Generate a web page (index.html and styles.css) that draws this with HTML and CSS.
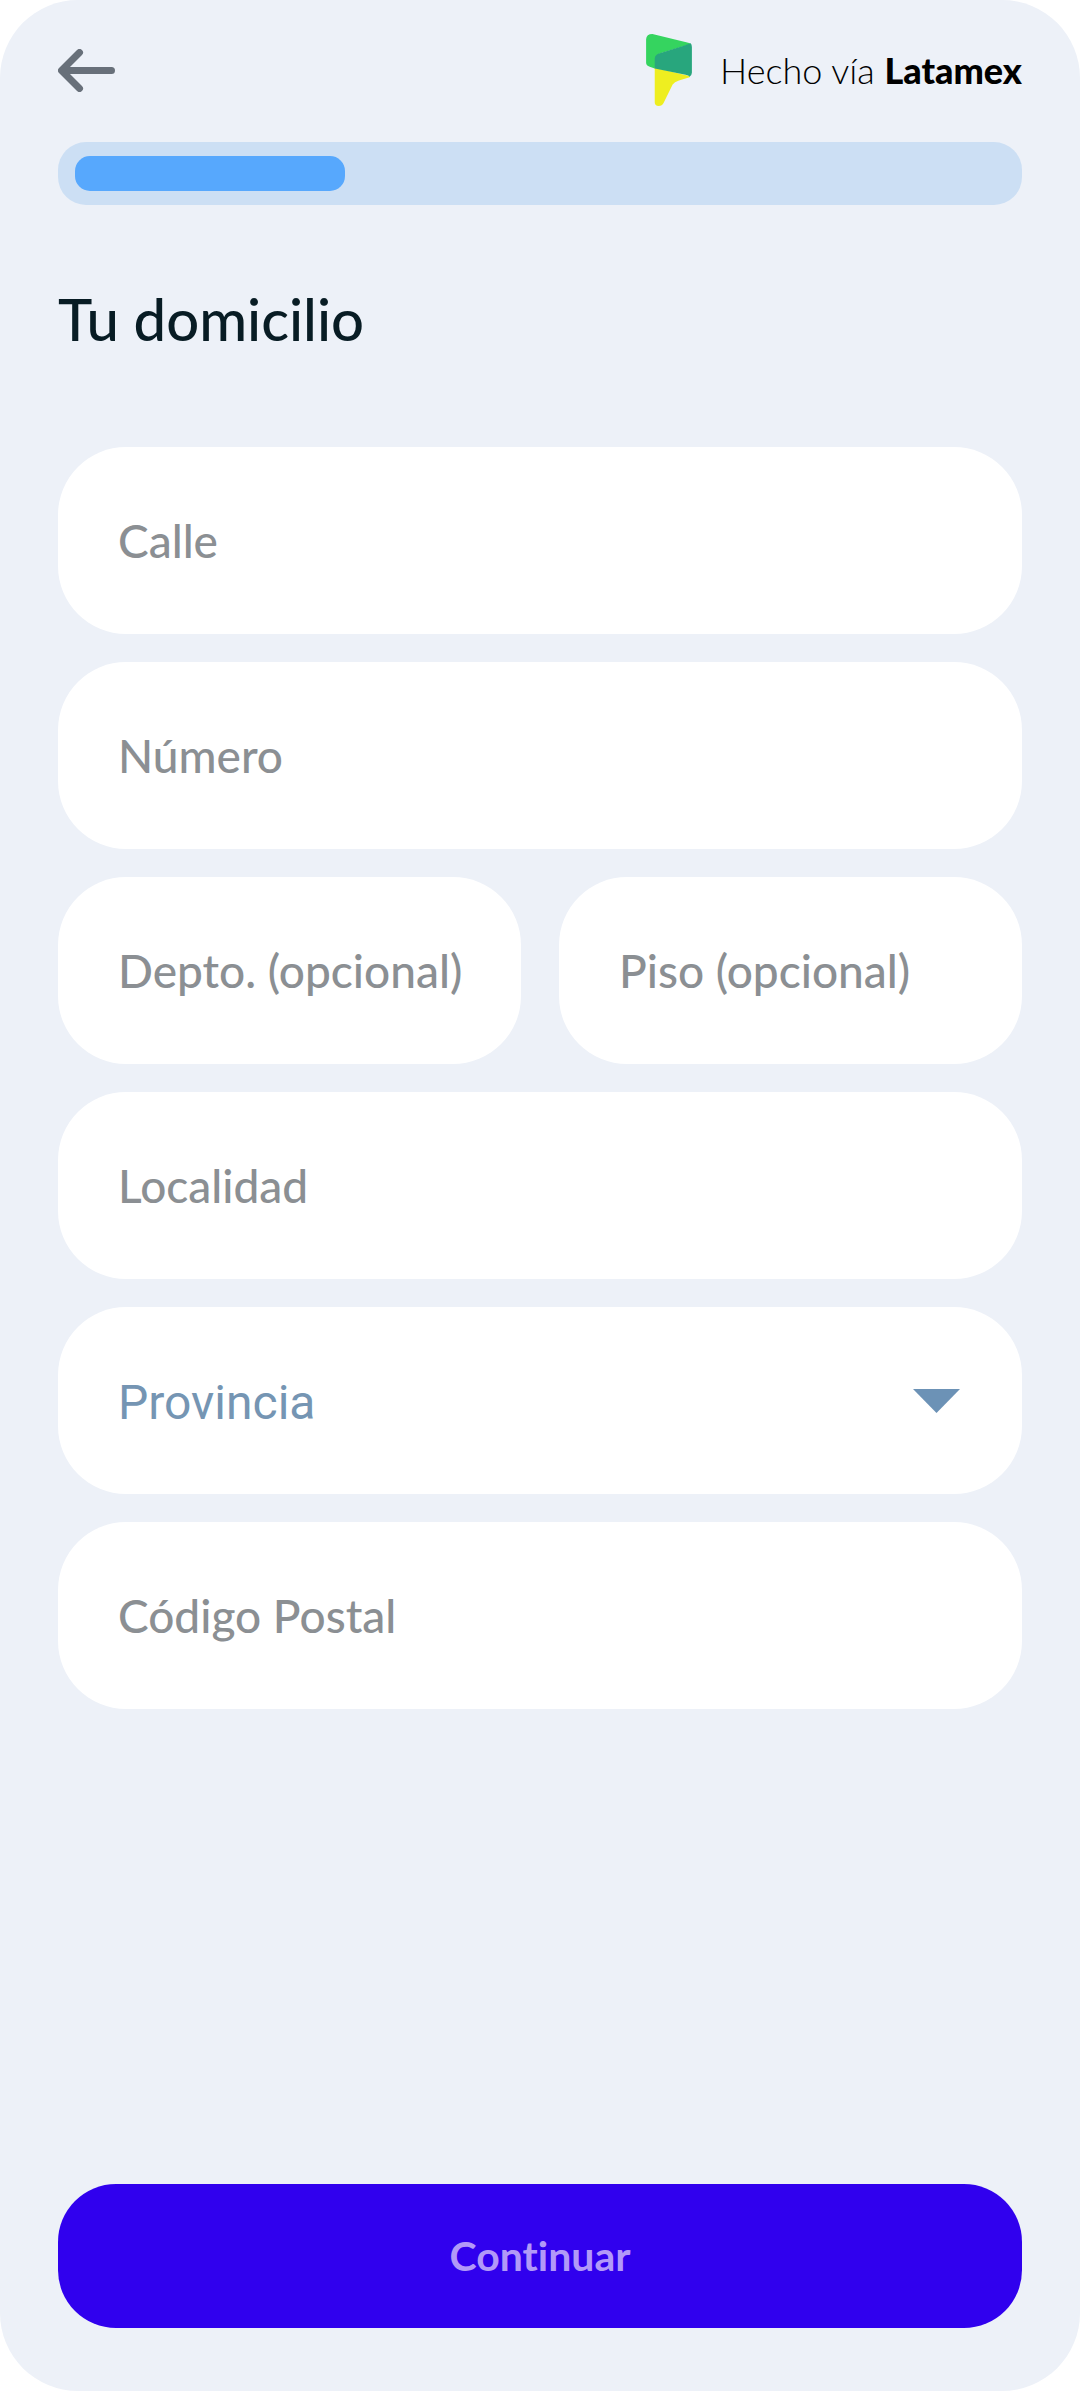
FILE: index.html
```html
<!DOCTYPE html>
<html lang="es">
<head>
  <meta charset="UTF-8">
  <meta name="viewport" content="width=device-width, initial-scale=1.0">
  <title>Tu domicilio</title>
  <link rel="stylesheet" href="styles.css">
</head>
<body>
  <main class="screen">
    <header class="topbar">
      <button class="back" type="button" aria-label="Volver">
        <svg width="57" height="43" viewBox="0 0 57 43" fill="none" stroke="#68707a" stroke-width="7" stroke-linecap="round" stroke-linejoin="round">
          <path d="M53.5 21.5H5M21.5 3.5L3.5 21.5L21.5 39.5"/>
        </svg>
      </button>
      <div class="brand">
        <svg class="brand-logo" width="46" height="72" viewBox="69 101 138 217">
          <path fill="#35d45f" d="M69 117Q70 101 88 101L190 126Q200 128 204 131L110 160L97 206L80 200Q69 197 69 188Z"/>
          <path fill="#eeee20" d="M95 203L190 225Q205 228 200 231L168 241Q154 245 149 253L122 308Q117 318 107 318Q95 318 95 307Z"/>
          <path fill="#28a67d" d="M95 174Q96 163 110 159L180 137Q194 133 203 129Q207 132 207 140V218Q206 228 200 230Q198 226 188 224L95 205Z"/>
        </svg>
        <span class="brand-text">Hecho vía <strong>Latamex</strong></span>
      </div>
    </header>

    <div class="progress" role="progressbar" aria-label="Progreso" aria-valuemin="0" aria-valuemax="100" aria-valuenow="29">
      <div class="progress-bar" style="width: 29%"></div>
    </div>

    <h1 class="title">Tu domicilio</h1>

    <form class="form" id="address">
      <input class="field" type="text" name="calle" placeholder="Calle" aria-label="Calle">
      <input class="field" type="text" name="numero" placeholder="Número" aria-label="Número">
      <div class="row">
        <input class="field" type="text" name="depto" placeholder="Depto. (opcional)" aria-label="Depto. (opcional)">
        <input class="field" type="text" name="piso" placeholder="Piso (opcional)" aria-label="Piso (opcional)">
      </div>
      <input class="field" type="text" name="localidad" placeholder="Localidad" aria-label="Localidad">
      <div class="select">
        <select class="field" name="provincia" aria-label="Provincia">
          <option>Provincia</option>
        </select>
        <svg class="select-arrow" width="47" height="24" viewBox="0 0 47 24">
          <path fill="#6c92b6" d="M0 0H47L23.5 24Z"/>
        </svg>
      </div>
      <input class="field" type="text" name="cp" placeholder="Código Postal" aria-label="Código Postal">
    </form>

    <button class="submit" type="submit" form="address">Continuar</button>
  </main>
</body>
</html>
```
FILE: styles.css
```css
* {
  box-sizing: border-box;
}
body {
  margin: 0;
  background: #ffffff;
  font-family: Lato, sans-serif;
  font-variant-ligatures: none;
}
.screen {
  display: flex;
  flex-direction: column;
  min-height: 100vh;
  padding: 34px 58px 63px;
  border-radius: 78px;
  background: #edf1f8;
}
.topbar {
  display: flex;
  justify-content: space-between;
  align-items: center;
}
.back {
  display: flex;
  padding: 0;
  border: none;
  background: none;
  cursor: pointer;
}
.brand {
  display: flex;
  align-items: center;
  gap: 28px;
}
.brand-text {
  font-size: 36px;
  font-weight: 300;
  color: #000000;
}
.brand-text strong {
  font-weight: 900;
}
.progress {
  margin-top: 36px;
  padding: 14px 17px;
  border-radius: 28px;
  background: #ccdff4;
}
.progress-bar {
  height: 35px;
  border-radius: 15px;
  background: #57a8fd;
}
.title {
  margin: 82px 0 96px;
  font-size: 58px;
  font-weight: 500;
  line-height: 64px;
  color: #081c24;
}
.form {
  display: flex;
  flex-direction: column;
  gap: 28px;
}
.row {
  display: grid;
  grid-template-columns: 1fr 1fr;
  gap: 38px;
}
.field {
  width: 100%;
  min-width: 0;
  padding: 66px 50px 65px 60px;
  border: none;
  border-radius: 68px;
  background: #ffffff;
  font-family: inherit;
  font-size: 46px;
  font-weight: 500;
  line-height: 56px;
  color: #081c24;
  appearance: none;
}
.field::placeholder {
  color: #8b8f93;
  opacity: 1;
}
.select {
  display: grid;
  align-items: center;
}
.select .field,
.select-arrow {
  grid-area: 1 / 1;
}
.select .field {
  padding-top: 68px;
  padding-bottom: 63px;
  font-family: Roboto, sans-serif;
  font-size: 48px;
  font-weight: 400;
  color: #7595b3;
}
.select-arrow {
  justify-self: end;
  margin-right: 62px;
  pointer-events: none;
}
.submit {
  margin-top: auto;
  padding: 48px;
  border: none;
  border-radius: 58px;
  background: #3000ee;
  font-family: inherit;
  font-size: 41px;
  font-weight: 700;
  font-variant-ligatures: none;
  line-height: 48px;
  color: #b299f8;
  cursor: pointer;
}
```
